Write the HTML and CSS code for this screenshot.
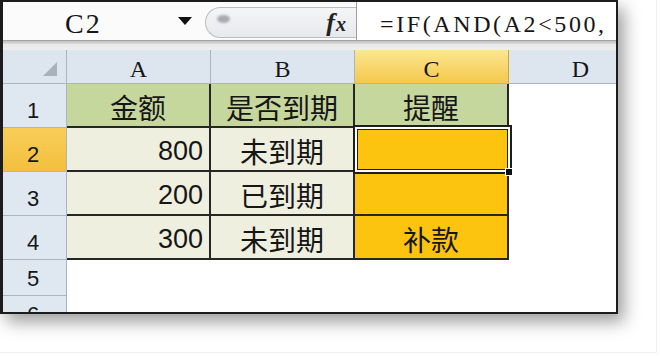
FILE: index.html
```html
<!DOCTYPE html>
<html>
<head>
<meta charset="utf-8">
<link rel="stylesheet" href="styles.css">
</head>
<body>
<div class="page">
  <div class="win">
    <div class="fbar">
      <div class="namebox"><span class="ref">C2</span><span class="arrow"></span></div>
      <div class="pill"><span class="blob"></span><span class="fx"><i>f</i><i class="fx-x">x</i></span></div>
      <div class="formula">=IF(AND(A2&lt;500,</div>
    </div>
    <div class="band"></div>
    <div class="sheet">
      <div class="h corner"><span class="tri"></span></div>
      <div class="h">A</div>
      <div class="h">B</div>
      <div class="h hsel">C</div>
      <div class="h">D</div>

      <div class="rh">1</div>
      <div class="c g">金额</div>
      <div class="c g">是否到期</div>
      <div class="c g">提醒</div>
      <div class="e"></div>

      <div class="rh rsel">2</div>
      <div class="c b num">800</div>
      <div class="c b">未到期</div>
      <div class="c o cur"><span class="selbox"></span><span class="handle"></span></div>
      <div class="e"></div>

      <div class="rh">3</div>
      <div class="c b num">200</div>
      <div class="c b">已到期</div>
      <div class="c o"></div>
      <div class="e"></div>

      <div class="rh">4</div>
      <div class="c b num">300</div>
      <div class="c b">未到期</div>
      <div class="c o">补款</div>
      <div class="e"></div>

      <div class="rh">5</div>
      <div class="e"></div>
      <div class="e"></div>
      <div class="e"></div>
      <div class="e"></div>

      <div class="rh">6</div>
      <div class="e"></div>
      <div class="e"></div>
      <div class="e"></div>
      <div class="e"></div>
    </div>
  </div>
</div>
</body>
</html>
```
FILE: styles.css
```css
* { box-sizing: border-box; margin: 0; padding: 0; }
body { background: #fff; width: 660px; height: 356px; overflow: hidden; color: #161616; }
.page { width: 657px; height: 353px; border-right: 1px solid #efefef; border-bottom: 1px solid #efefef; }
.win {
  width: 618px; height: 314px;
  border: 2px solid #1c1c1c; border-left-width: 3px;
  box-shadow: 6px 8px 16px rgba(0,0,0,0.38);
  display: flex; flex-direction: column; overflow: hidden; background: #fff;
}
.fbar { flex: none; height: 39px; display: flex; border-bottom: 1px solid #a3a3a3; background: #fbfbfb; }
.namebox { width: 202px; display: flex; align-items: center; padding-left: 62px; padding-top: 6px; }
.ref { font-family: "Liberation Serif", serif; font-size: 28px; letter-spacing: 2px; line-height: 1; }
.arrow {
  margin-left: auto; margin-right: 13px; margin-top: -6px;
  width: 0; height: 0;
  border-left: 7px solid transparent; border-right: 7px solid transparent; border-top: 8px solid #111;
}
.pill {
  width: 151px; height: 31px; margin-top: 5px;
  border: 1px solid #bcbcbc; border-right: none; border-radius: 16px 0 0 16px;
  background: linear-gradient(#f4f5f7, #e7e9ec);
  display: flex; align-items: center;
}
.blob {
  width: 13px; height: 8px; margin-left: 11px; margin-top: -7px;
  border-radius: 50%; background: #a8abb0; filter: blur(1px);
}
.fx { margin-left: auto; margin-right: 10px; font-family: "Liberation Serif", serif; font-weight: bold; font-size: 26px; line-height: 1; color: #222; }
.fx i { font-style: italic; }
.fx-x { font-size: 20px; margin-left: 1px; }
.formula {
  flex: 1; border-left: 1px solid #a0a0a0; background: #fff;
  padding-left: 23px; padding-top: 6px; display: flex; align-items: center;
  font-family: "Liberation Serif", serif; font-size: 24px; letter-spacing: 2.6px; white-space: nowrap; line-height: 1;
}
.band { flex: none; height: 9px; background: linear-gradient(#c8c8c8 0, #cbcbcb 2px, #e8e8e8 3px, #eeeeee 100%); }
.sheet {
  flex: 1; display: grid;
  grid-template-columns: 64px 144px 144px 154px 144px;
  grid-template-rows: 34px 44px 44px 44px 44px 36px 36px;
}
.h {
  background: #dde5ef; border-right: 1px solid #a9b5c3; border-bottom: 1px solid #a9b5c3;
  display: flex; align-items: center; justify-content: center;
  font-family: "Liberation Serif", serif; font-size: 24px; line-height: 1; padding-top: 4px;
}
.corner { justify-content: flex-end; align-items: flex-end; padding: 0 9px 7px 0; }
.tri { width: 0; height: 0; border-left: 14px solid transparent; border-bottom: 14px solid #a9b1ba; }
.hsel { background: linear-gradient(#fce690, #f4c84c); border-right-color: #c9a640; }
.rh {
  background: #dfe7f0; border-right: 1px solid #a9b5c3; border-bottom: 1px solid #a9b5c3;
  display: flex; align-items: flex-end; justify-content: center; padding-bottom: 5px;
  font-family: "Liberation Sans", sans-serif; font-size: 22px; line-height: 1; padding-right: 3px;
}
.rsel { background: linear-gradient(#f8cd58, #f3c03e); }
.c {
  border-right: 2px solid #262626; border-bottom: 2px solid #262626;
  display: flex; align-items: center; justify-content: center;
  font-family: "Noto Sans CJK SC", sans-serif; font-size: 28px; line-height: 1; padding-top: 3px;
}
.g { background: #c6d79e; }
.b { background: #efefe0; }
.o { background: #fdc40f; }
.num { justify-content: flex-end; padding-right: 6px; font-family: "Liberation Sans", sans-serif; font-size: 27px; padding-top: 5px; }
.e { background: #fff; }
.cur { position: relative; }
.selbox {
  position: absolute; left: -2px; top: -3px; right: -5px; bottom: -4px;
  border: 2px solid #1e1e1e;
  box-shadow: inset 0 0 0 2px #fff, inset 0 0 0 3px #1e1e1e;
}
.handle {
  position: absolute; right: -6px; bottom: -6px; width: 8px; height: 8px;
  background: #111; border: 1px solid #fff;
}
```
